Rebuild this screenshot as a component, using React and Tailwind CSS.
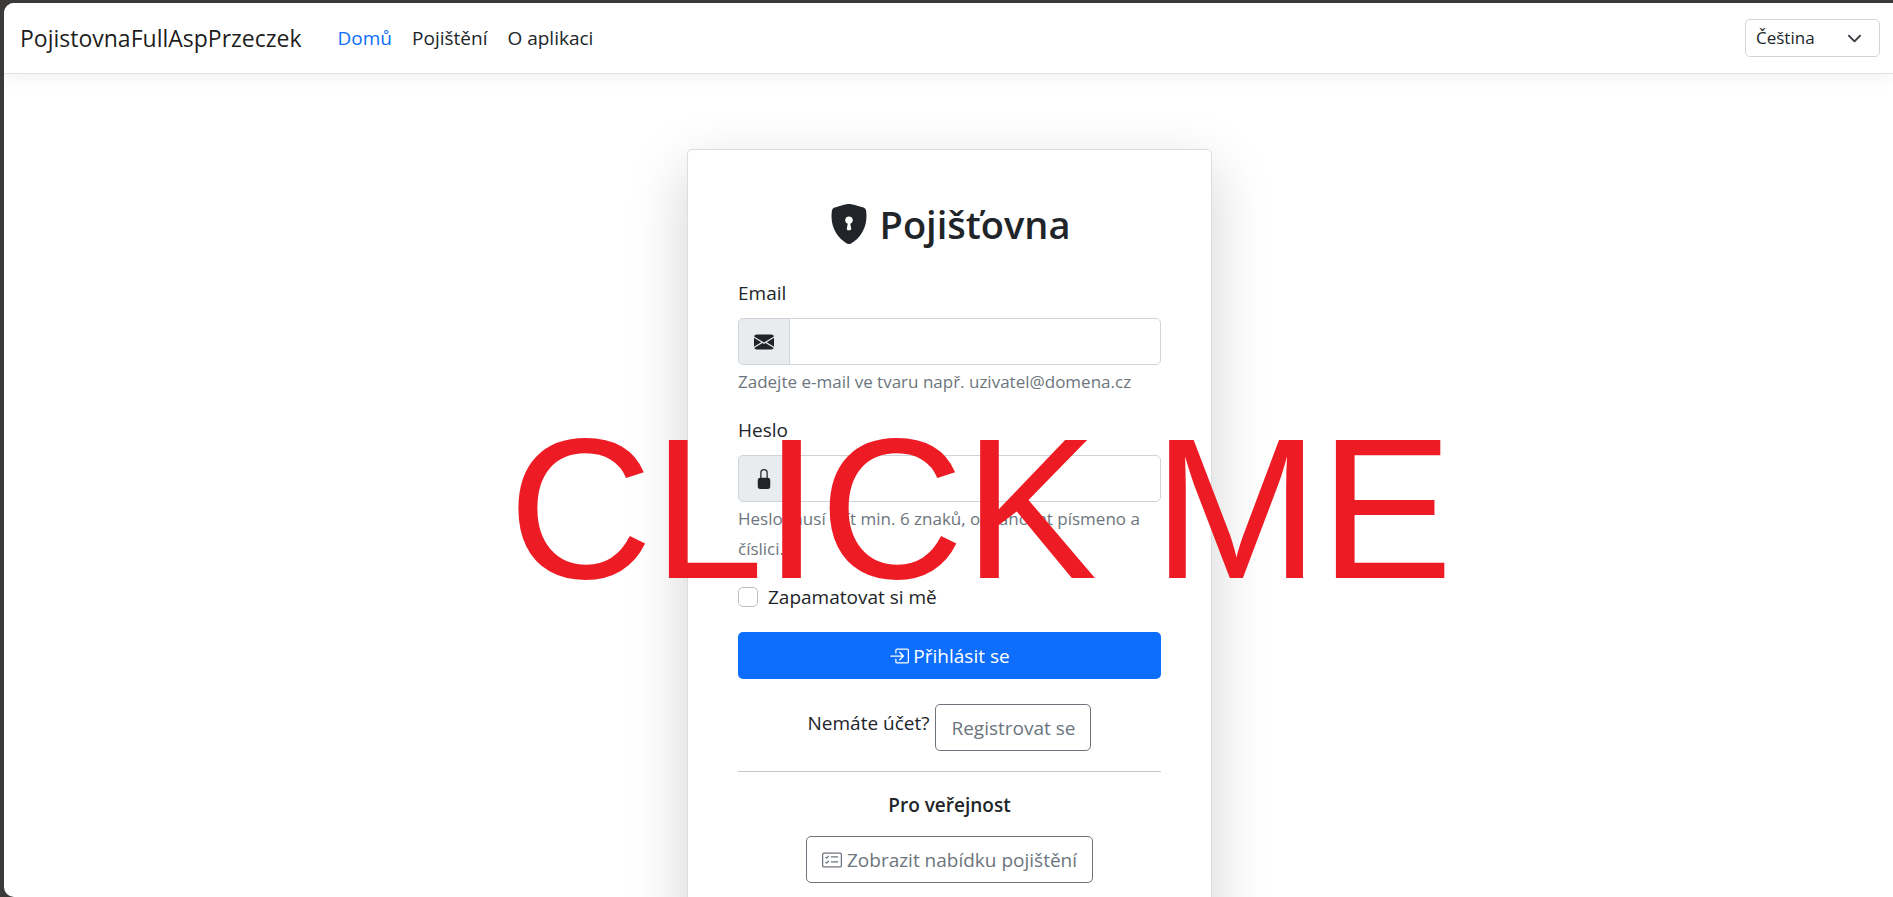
import {
  BsShieldLockFill,
  BsEnvelopeFill,
  BsLockFill,
  BsBoxArrowInRight,
  BsCardChecklist,
} from "react-icons/bs";

function NavBar() {
  return (
    <header className="relative flex items-center border-b border-[#dee2e6] bg-white pt-4 pr-[13px] pb-4 pl-4 shadow-[0_5px_15px_rgba(0,0,0,0.05)]">
      <a href="#" className="mr-[26px] text-[23px] leading-[38px] text-black/90">
        PojistovnaFullAspPrzeczek
      </a>
      <nav className="flex flex-1">
        <a href="#" className="px-[10px] text-[#0d6efd]">Domů</a>
        <a href="#" className="px-[10px]">Pojištění</a>
        <a href="#" className="px-[10px]">O aplikaci</a>
      </nav>
      <div className="relative">
        <select
          aria-label="Jazyk"
          className="h-[38px] w-[135px] appearance-none rounded-[5px] border border-[#ced4da] bg-white pl-[10px] text-[17px]"
        >
          <option>Čeština</option>
          <option>English</option>
        </select>
        <svg
          viewBox="0 0 16 16"
          fill="none"
          stroke="#343a40"
          strokeWidth="2"
          strokeLinecap="round"
          strokeLinejoin="round"
          className="pointer-events-none absolute top-3 right-[18px] size-[15px]"
        >
          <path d="m2 5 6 6 6-6" />
        </svg>
      </div>
    </header>
  );
}

function Field({ id, type, label, hint, icon: Icon }) {
  return (
    <div className="mb-[18px]">
      <label htmlFor={id} className="mb-[10px] block">{label}</label>
      <div className="flex h-[47px]">
        <span className="flex w-[52px] items-center justify-center rounded-l-[5px] border border-[#ced4da] bg-[#e9ecef]">
          <Icon className="size-5" />
        </span>
        <input
          id={id}
          type={type}
          className="-ml-px min-w-0 flex-1 rounded-r-[5px] border border-[#ced4da] bg-white px-[15px] outline-none"
        />
      </div>
      <p className="mt-[2px] text-[17px] leading-[30px] text-[#6c757d]">{hint}</p>
    </div>
  );
}

function LoginCard() {
  return (
    <section className="w-full max-w-[525px] rounded-[5px] border border-[#dcdddd] bg-white p-[50px] shadow-[0_20px_60px_rgba(0,0,0,0.175)]">
      <h1 className="mb-[30px] flex items-center justify-center gap-[11px] text-[38px] leading-[48px] font-semibold">
        <BsShieldLockFill className="size-10" />
        Pojišťovna
      </h1>
      <form>
        <Field
          id="email"
          type="email"
          label="Email"
          hint="Zadejte e-mail ve tvaru např. uzivatel@domena.cz"
          icon={BsEnvelopeFill}
        />
        <Field
          id="password"
          type="password"
          label="Heslo"
          hint="Heslo musí mít min. 6 znaků, obsahovat písmeno a číslici."
          icon={BsLockFill}
        />
        <label className="mb-5 flex items-center gap-[10px]">
          <input
            type="checkbox"
            className="size-5 appearance-none rounded-[5px] border border-[#bfbfbf] bg-white checked:bg-[#0d6efd]"
          />
          Zapamatovat si mě
        </label>
        <button
          type="button"
          className="mb-[25px] flex h-[47px] w-full items-center justify-center gap-1 rounded-[5px] bg-[#0d6efd] text-white"
        >
          <BsBoxArrowInRight className="size-5" />
          Přihlásit se
        </button>
      </form>
      <div className="flex items-start justify-center gap-[6px]">
        <p className="py-1">Nemáte účet?</p>
        <a
          href="#"
          className="flex h-[47px] items-center rounded-[5px] border border-[#6c757d] px-[15px] text-[#6c757d]"
        >
          Registrovat se
        </a>
      </div>
      <hr className="mt-5 mb-[18px] border-[#c7c8c9]" />
      <div className="text-center">
        <p className="mb-4 font-semibold">Pro veřejnost</p>
        <a
          href="#"
          className="inline-flex h-[47px] items-center gap-[5px] rounded-[5px] border border-[#6c757d] px-[15px] text-[#6c757d]"
        >
          <BsCardChecklist className="size-5" />
          Zobrazit nabídku pojištění
        </a>
      </div>
    </section>
  );
}

export default function App() {
  return (
    <div className="h-screen bg-[#3b3a39] pt-[3px] pl-1">
      <div className="relative h-full overflow-hidden rounded-l-[10px] bg-white font-['Open_Sans','Noto_Sans',sans-serif] text-[19px] leading-[30px] text-[#212529]">
        <NavBar />
        <main className="flex justify-center pt-[75px] pr-4 pb-[75px] pl-[18px]">
          <LoginCard />
        </main>
        <div className="pointer-events-none absolute inset-x-0 top-[394px] pl-16 text-center font-['Liberation_Sans',Arial,sans-serif] text-[200px] leading-[224px] whitespace-nowrap text-[#ed1c24]">
          CLICK ME
        </div>
      </div>
    </div>
  );
}
